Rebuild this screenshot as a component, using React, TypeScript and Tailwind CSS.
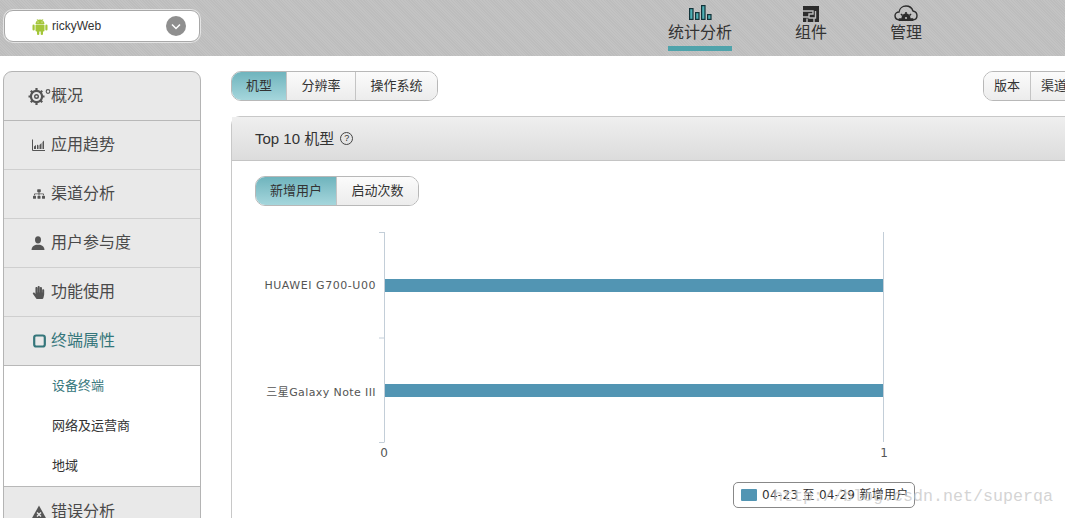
import { FaSitemap, FaHandPaper } from 'react-icons/fa'

const font = "font-['Liberation_Sans','Noto_Sans_CJK_SC',sans-serif]"
const chartFont = "'DejaVu Sans','Noto Sans CJK SC',sans-serif"

function AndroidIcon() {
  return (
    <svg width="16" height="17" viewBox="0 0 16 17" fill="#a4c639">
      <path d="M3.5 6C3.7 3.2 5.5 1.5 8 1.5C10.5 1.5 12.3 3.2 12.5 6Z" />
      <path d="M5 1L6.2 2.8M11 1L9.8 2.8" stroke="#a4c639" strokeWidth="0.7" />
      <rect x="3.5" y="6.6" width="9" height="7" rx="1" />
      <rect x="0.5" y="6.6" width="2.2" height="6" rx="1.1" />
      <rect x="13.3" y="6.6" width="2.2" height="6" rx="1.1" />
      <rect x="5" y="12" width="2.3" height="5" rx="1.1" />
      <rect x="8.7" y="12" width="2.3" height="5" rx="1.1" />
      <circle cx="6" cy="3.9" r="0.5" fill="#fff" />
      <circle cx="10" cy="3.9" r="0.5" fill="#fff" />
    </svg>
  )
}

function GearIcon() {
  return (
    <svg width="23" height="18" viewBox="0 0 23 18" fill="none" stroke="#555">
      <circle cx="8.5" cy="9.5" r="5.6" strokeWidth="2.2" />
      <circle cx="8.5" cy="9.5" r="1.8" strokeWidth="1.4" />
      <path
        d="M8.5 1V3.5M8.5 15.5V18M0.5 9.5H3M14 9.5H16.5M2.8 3.8L4.6 5.6M12.4 13.4L14.2 15.2M14.2 3.8L12.4 5.6M4.6 13.4L2.8 15.2"
        strokeWidth="2.2"
      />
      <circle cx="20" cy="4.5" r="1.8" strokeWidth="1.2" />
    </svg>
  )
}

function TrendIcon() {
  return (
    <svg width="13" height="12" viewBox="0 0 13 12" className="text-[#555]">
      <path d="M0.5 0.5V11.5H13" fill="none" stroke="currentColor" />
      <path d="M2 10V7.5L4 6V10ZM5 10V5.5L6.5 6.5V10ZM7.5 10V6L9.5 4V10ZM10.5 10V3L12 1.5V10Z" fill="currentColor" />
    </svg>
  )
}

function UserIcon() {
  return (
    <svg width="14" height="14" viewBox="0 0 14 14" fill="#555">
      <ellipse cx="7" cy="3.8" rx="3" ry="3.6" />
      <path d="M0.5 14C0.5 11 2.5 9.8 5 8.8H9C11.5 9.8 13.5 11 13.5 14Z" />
    </svg>
  )
}

function TabletIcon() {
  return (
    <svg width="13" height="14" viewBox="0 0 13 14">
      <rect x="1.2" y="1.5" width="10.6" height="11" rx="2" fill="none" stroke="#35767b" strokeWidth="2.2" />
    </svg>
  )
}

function ErrorIcon() {
  return (
    <svg width="16" height="14" viewBox="0 0 16 14">
      <path d="M8 0.5L15.5 14H0.5Z" fill="#555" />
      <path d="M6 7.5L10 11.5M10 7.5L6 11.5" stroke="#e8e8e8" strokeWidth="1.4" />
    </svg>
  )
}

function StatsIcon() {
  return (
    <svg width="23" height="15" viewBox="0 0 23 15" fill="#4fb0b5" stroke="#12333a" strokeWidth="1.2">
      <rect x="0.6" y="3.6" width="3.4" height="10.8" />
      <rect x="6.6" y="7.6" width="3.4" height="6.8" />
      <rect x="12.6" y="0.6" width="3.4" height="13.8" />
      <rect x="18.6" y="9.6" width="3.4" height="4.8" />
    </svg>
  )
}

function WidgetIcon() {
  return (
    <svg width="16" height="16" viewBox="0 0 16 16">
      <rect width="16" height="16" fill="#2c2c2c" />
      <path d="M0 5H10V8H6V11H0M12.5 5V12H5.5M4 12.5V16M11 12.5V16" fill="none" stroke="#bcbcbc" strokeWidth="1.4" />
    </svg>
  )
}

function CloudIcon() {
  return (
    <svg width="24" height="16" viewBox="0 0 24 16">
      <path
        d="M6 15C3 15 1 13.2 1 10.8C1 8.5 3 7 5 7C5.5 3.5 8.5 1 12 1C15.5 1 18 3 19 6C21.5 6.5 23 8.5 23 10.8C23 13.2 21 15 18 15Z"
        fill="none"
        stroke="#2c2c2c"
        strokeWidth="1.4"
      />
      <circle cx="12" cy="13" r="4.5" fill="#2c2c2c" />
      <path d="M12 7V9M7 9L8.5 10.5M17 9L15.5 10.5M5.5 14H18.5V15.5H5.5Z" stroke="#2c2c2c" strokeWidth="1.6" />
      <circle cx="12" cy="13" r="1.1" fill="#bcbcbc" />
    </svg>
  )
}

const menu = [
  { label: '应用趋势', icon: <TrendIcon /> },
  { label: '渠道分析', icon: <FaSitemap size={12} className="text-[#555]" /> },
  { label: '用户参与度', icon: <UserIcon /> },
  { label: '功能使用', icon: <FaHandPaper size={13} className="text-[#555]" /> },
]

function SegBtn({
  label,
  active,
  first,
  last,
  left,
}: {
  label: string
  active?: boolean
  first?: boolean
  last?: boolean
  left?: boolean
}) {
  return (
    <div
      className={`flex h-full items-center border-r border-[#c4c4c4] text-[13px] text-[#333] last:border-r-0 ${
        left ? 'justify-start pl-[10px]' : 'justify-center'
      } ${active ? 'bg-gradient-to-b from-[#6fb4bd] to-[#a5d6dc]' : 'bg-gradient-to-b from-[#fbfbfb] to-[#ececec]'} ${
        first ? 'rounded-l-[9px]' : ''
      } ${last ? 'rounded-r-[9px]' : ''}`}
    >
      {label}
    </div>
  )
}

function Sidebar() {
  return (
    <div className="ml-[3px] w-[198px] shrink-0 self-start rounded-t-[9px] border border-[#b4b4b4] bg-[#e9e9e9] text-[16px] text-[#4a4a4a]">
      <div className="flex h-[49px] items-center border-b border-[#b8b8b8] pl-[24px]">
        <GearIcon />
        <span>概况</span>
      </div>
      {menu.map((m) => (
        <div key={m.label} className="flex h-[49px] items-center border-b border-[#cfcfcf]">
          <div className="flex w-[47px] justify-end pr-[6px]">{m.icon}</div>
          <span>{m.label}</span>
        </div>
      ))}
      <div className="flex h-[49px] items-center border-b border-[#b8b8b8] text-[#35767b]">
        <div className="flex w-[47px] justify-end pr-[5px]">
          <TabletIcon />
        </div>
        <span>终端属性</span>
      </div>
      <div className="border-b border-[#b8b8b8] bg-white pl-[48px] text-[13px] text-[#333]">
        <div className="flex h-[40px] items-center text-[#35767b]">设备终端</div>
        <div className="flex h-[40px] items-center">网络及运营商</div>
        <div className="flex h-[40px] items-center">地域</div>
      </div>
      <div className="flex h-[49px] items-center">
        <div className="flex w-[47px] justify-end pr-[4px]">
          <ErrorIcon />
        </div>
        <span>错误分析</span>
      </div>
    </div>
  )
}

function Chart() {
  const axis = '#c3ced8'
  const bar = '#5295b3'
  const label = { fontFamily: chartFont, fontSize: 11, fill: '#555', textAnchor: 'end' as const }
  const tick = { fontFamily: chartFont, fontSize: 12, fill: '#555', textAnchor: 'middle' as const }
  return (
    <svg width="740" height="240" viewBox="0 0 740 240" className="mt-[26px] block">
      <path d="M129.5 0V210M124 0.5H129.5M124 106H129.5M124 210.5H129.5" fill="none" stroke={axis} />
      <path d="M628.5 0V210" fill="none" stroke={axis} />
      <rect x="130" y="47" width="498" height="13" fill={bar} />
      <rect x="130" y="152" width="498" height="13" fill={bar} />
      <text x="121" y="57" {...label} letterSpacing="0.55">HUAWEI G700-U00</text>
      <text x="121" y="164" {...label} letterSpacing="0.4">三星Galaxy Note III</text>
      <text x="129" y="225" {...tick}>0</text>
      <text x="629" y="225" {...tick}>1</text>
    </svg>
  )
}

export default function App() {
  return (
    <div className={`relative h-[518px] w-[1065px] overflow-hidden bg-white ${font}`}>
      <header className="flex h-[56px] bg-[repeating-linear-gradient(45deg,#bdbdbd_0px,#bdbdbd_1px,#c3c3c3_1px,#c3c3c3_2px)]">
        <div className="ml-[4px] mt-[10px] flex h-[32px] w-[196px] items-center rounded-[9px] border border-[#a8a8a8] bg-white shadow-[0_0_0_1px_#e4e4e4] pl-[27px] pr-[13px]">
          <AndroidIcon />
          <span className="ml-[4px] text-[12px] text-[#333]">rickyWeb</span>
          <span className="ml-auto flex h-[20px] w-[20px] items-center justify-center rounded-full bg-[#8f8f8f]">
            <svg width="10" height="7" viewBox="0 0 10 7" fill="none" stroke="#fff" strokeWidth="1.5">
              <path d="M1 1.5L5 5.5L9 1.5" />
            </svg>
          </span>
        </div>
        <nav className="ml-[468px] flex text-[16px] text-[#333]">
          <div className="flex w-[64px] flex-col items-center">
            <div className="mt-[5px] flex h-[15px] items-end">
              <StatsIcon />
            </div>
            <span className="mt-[2px] leading-[22px]">统计分析</span>
            <div className="mt-[2px] h-[5px] w-full bg-[#4fa3ab]" />
          </div>
          <div className="ml-[63px] flex w-[32px] flex-col items-center">
            <div className="mt-[6px] flex h-[16px] items-start">
              <WidgetIcon />
            </div>
            <span className="leading-[22px]">组件</span>
          </div>
          <div className="ml-[63px] flex w-[32px] flex-col items-center">
            <div className="mt-[5px] flex h-[17px] items-start">
              <CloudIcon />
            </div>
            <span className="leading-[22px]">管理</span>
          </div>
        </nav>
      </header>

      <div className="mt-[15px] flex">
        <Sidebar />
        <main className="ml-[30px] w-[892px] shrink-0">
          <div className="flex justify-between">
            <div className="grid h-[30px] w-[207px] grid-cols-[55px_69px_81px] rounded-[10px] border border-[#b8b8b8]">
              <SegBtn label="机型" active first />
              <SegBtn label="分辨率" />
              <SegBtn label="操作系统" last />
            </div>
            <div className="grid h-[30px] w-[140px] grid-cols-[47px_93px] rounded-[10px] border border-[#b8b8b8]">
              <SegBtn label="版本" first />
              <SegBtn label="渠道" last left />
            </div>
          </div>

          <section className="mt-[15px] h-[420px] rounded-t-[9px] border border-[#c8c8c8]">
            <div className="flex h-[44px] items-center border-b border-[#c4c4c4] bg-gradient-to-b from-[#efefef] to-[#dcdcdc] pl-[23px] text-[15px] text-[#333]">
              <span className="mt-[1px]">Top 10 机型</span>
              <span className="ml-[6px] flex h-[13px] w-[13px] items-center justify-center rounded-full border border-[#444] text-[9px] leading-none">
                ?
              </span>
            </div>
            <div className="pl-[23px] pt-[15px]">
              <div className="grid h-[30px] w-[164px] grid-cols-[81px_81px] rounded-[10px] border border-[#b8b8b8]">
                <SegBtn label="新增用户" active first />
                <SegBtn label="启动次数" last />
              </div>
              <Chart />
            </div>
          </section>
        </main>
      </div>

      <div
        className="absolute left-[733px] top-[482px] flex h-[26px] w-[182px] items-center rounded-[5px] border border-[#888] bg-white pl-[7px] text-[12px] text-[#333]"
        style={{ fontFamily: chartFont }}
      >
        <span className="mr-[5px] h-[12px] w-[16px] rounded-[1px] bg-[#5295b3]" />
        <span className="whitespace-nowrap tracking-[0.3px]">04-23 至 04-29 新增用户</span>
      </div>

      <div className="absolute left-[773px] top-[485px] whitespace-nowrap font-['Liberation_Mono',monospace] text-[16.67px] leading-[24px] text-[#c9c9c9]/80">
        http://blog.csdn.net/superqa
      </div>
    </div>
  )
}
